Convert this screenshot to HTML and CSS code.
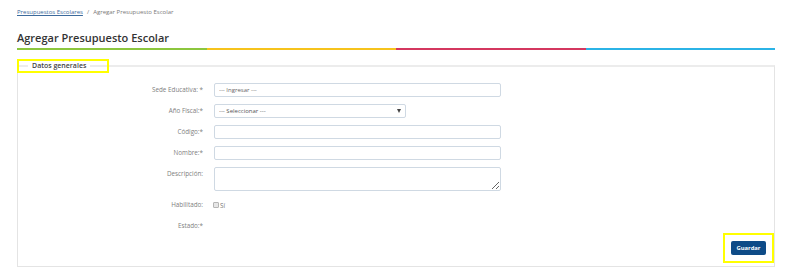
FILE: index.html
```html
<!DOCTYPE html>
<html lang="es">
<head>
<meta charset="utf-8">
<title>Agregar Presupuesto Escolar</title>
<link rel="stylesheet" href="styles.css">
</head>
<body>
<div class="page">
  <nav class="breadcrumb">
    <a href="#" class="crumb-link">Presupuestos Escolares</a>
    <span class="crumb-sep">/</span>
    <span class="crumb-current">Agregar Presupuesto Escolar</span>
  </nav>
  <h1 class="page-title">Agregar Presupuesto Escolar</h1>
  <div class="color-bar">
    <span class="seg seg-green"></span>
    <span class="seg seg-yellow"></span>
    <span class="seg seg-red"></span>
    <span class="seg seg-blue"></span>
  </div>

  <form class="panel">
    <fieldset class="fieldset">
      <legend class="legend"><span class="legend-text">Datos generales</span></legend>
      <div class="form-grid">
        <label class="lbl">Sede Educativa: *</label>
        <div class="ctl"><input class="inp inp-wide" type="text" placeholder="--- Ingresar ---"></div>

        <label class="lbl">Año Fiscal:*</label>
        <div class="ctl"><div class="select-wrap"><select class="inp inp-select"><option>--- Seleccionar ---</option></select></div></div>

        <label class="lbl">Código:*</label>
        <div class="ctl"><input class="inp inp-wide" type="text"></div>

        <label class="lbl">Nombre:*</label>
        <div class="ctl"><input class="inp inp-wide" type="text"></div>

        <label class="lbl lbl-top">Descripción:</label>
        <div class="ctl"><textarea class="inp inp-wide inp-area"></textarea></div>

        <label class="lbl">Habilitado:</label>
        <div class="ctl ctl-check"><input type="checkbox" class="chk"><span class="chk-text">Sí</span></div>

        <label class="lbl">Estado:*</label>
        <div class="ctl"></div>

        <div class="actions">
          <span class="highlight-btn"><button type="button" class="btn">Guardar</button></span>
        </div>
      </div>
    </fieldset>
  </form>
</div>
</body>
</html>
```

FILE: styles.css
```css
* { box-sizing: border-box; }

html, body {
  margin: 0;
  padding: 0;
  background: #ffffff;
}

body {
  font-family: "Open Sans", "Liberation Sans", sans-serif;
  color: #555;
}

.page {
  padding: 0 14px 0 17px;
}

.breadcrumb {
  padding-top: 8px;
  height: 18px;
  font-size: 6px;
  line-height: 9px;
  color: #7a7a7a;
  display: flex;
  gap: 4px;
}

.crumb-link {
  color: #3c6a9c;
  text-decoration: underline;
}

.page-title {
  margin: 12px 0 0 0;
  font-size: 11px;
  line-height: 16px;
  font-weight: 600;
  color: #333;
}

.color-bar {
  display: flex;
  height: 2px;
  margin-top: 2px;
}

.seg { flex: 1; }
.seg-green { background: #8cc63e; }
.seg-yellow { background: #f6c31c; }
.seg-red { background: #d4375f; }
.seg-blue { background: #2bb3e6; }

.panel {
  margin: 11px 0 0 0;
}

.fieldset {
  margin: 0;
  padding: 0 8px 11px 0;
  border: 1px solid #e4e4e4;
  border-top-width: 2px;
  border-top-color: #ececec;
}

.legend {
  position: relative;
  margin-left: 10px;
  padding: 0 4px;
  font-size: 7px;
  line-height: 10px;
  font-weight: 600;
  color: #444;
}

.legend::before {
  content: "";
  position: absolute;
  left: -11px;
  right: -19px;
  top: -2px;
  bottom: -2px;
  border: 2px solid #ffff00;
}

.form-grid {
  display: grid;
  grid-template-columns: 186px 1fr;
  column-gap: 10px;
  row-gap: 7px;
  padding-top: 12px;
}

.lbl {
  text-align: right;
  font-size: 6.3px;
  line-height: 14px;
  color: #808080;
  padding-right: 1px;
}

.lbl-top {
  line-height: 14px;
}

.ctl {
  min-height: 14px;
  display: flex;
  align-items: center;
}

.inp {
  display: block;
  height: 14px;
  border: 1px solid #cfd9e3;
  border-radius: 2px;
  background: #fff;
  font-family: "Open Sans", "Liberation Sans", sans-serif;
  font-size: 6px;
  line-height: 12px;
  color: #555;
  padding: 0 4px;
  margin: 0;
  outline: none;
}

.inp::placeholder { color: #666; }

.inp-wide { width: 287px; }

.inp-area {
  height: 24px;
  resize: both;
  padding: 2px 4px;
}

.select-wrap {
  position: relative;
  display: flex;
  width: 192px;
  height: 14px;
}

.select-wrap::after {
  content: "";
  position: absolute;
  right: 5px;
  top: 5px;
  border-left: 2.5px solid transparent;
  border-right: 2.5px solid transparent;
  border-top: 4px solid #444;
  pointer-events: none;
}

.inp-select {
  width: 192px;
  appearance: none;
  -webkit-appearance: none;
}

.ctl-check {
  gap: 1px;
}

.chk {
  appearance: none;
  -webkit-appearance: none;
  width: 6px;
  height: 6px;
  margin: 0 0 0 -1px;
  border: 1px solid #b5b5b5;
  background: #e6e6e6;
  border-radius: 1px;
}

.chk-text {
  font-size: 6.3px;
  color: #777;
}

.actions {
  grid-column: 1 / -1;
  display: flex;
  justify-content: flex-end;
  margin-top: 1px;
}

.highlight-btn {
  position: relative;
  display: inline-flex;
}

.highlight-btn::after {
  content: "";
  position: absolute;
  left: -8px;
  right: -8px;
  top: -8px;
  bottom: -8px;
  border: 2px solid #ffff00;
  pointer-events: none;
}

.btn {
  width: 35px;
  height: 14px;
  border: 0;
  border-radius: 2px;
  background: #0e4b87;
  color: #fff;
  font-family: "Open Sans", "Liberation Sans", sans-serif;
  font-size: 5.8px;
  font-weight: 700;
  padding: 0;
  cursor: pointer;
}
```
